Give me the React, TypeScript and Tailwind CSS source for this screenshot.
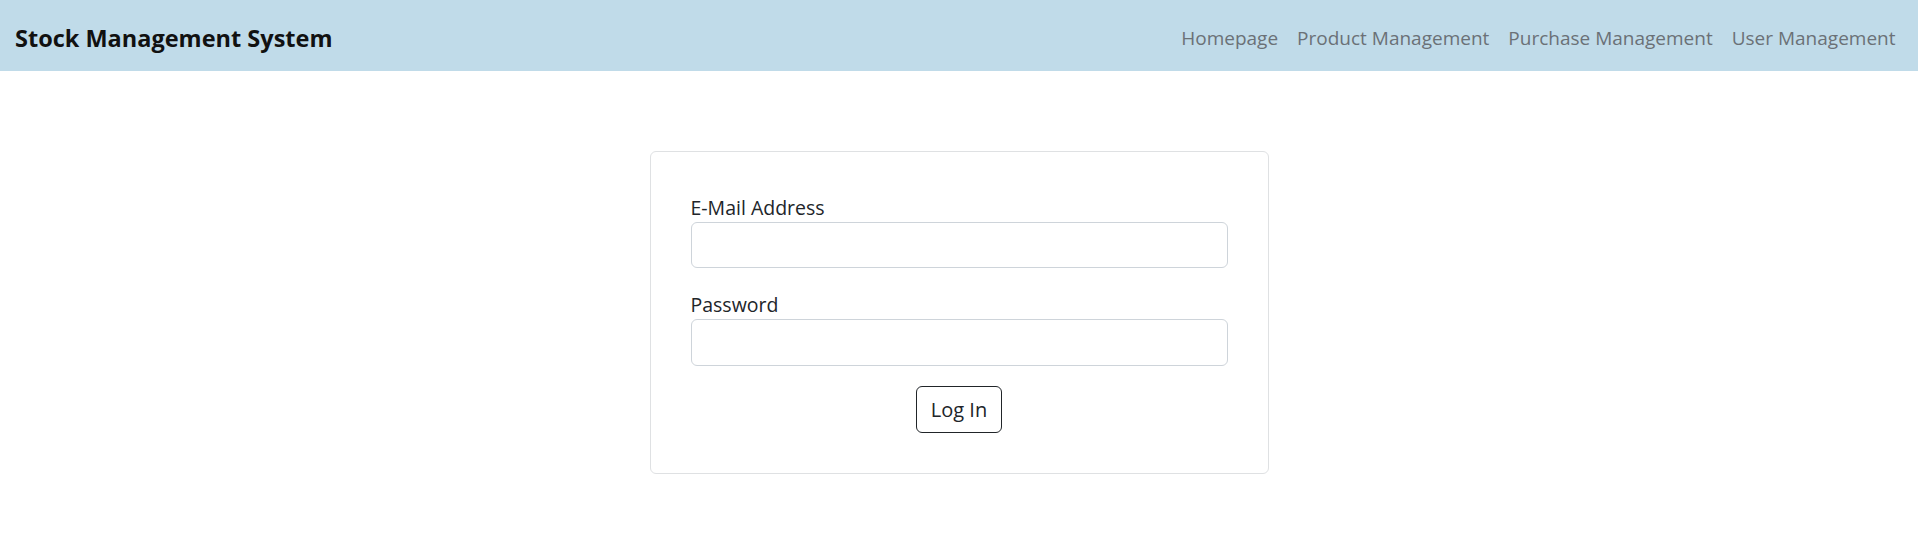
export default function App() {
  const links = ["Homepage", "Product Management", "Purchase Management", "User Management"]

  return (
    <div className="min-h-screen bg-white text-[#212529] font-['Open_Sans',sans-serif]">
      {/* Top bar */}
      <nav className="h-[71px] bg-[#c0dbe9] flex items-center justify-between pl-[15px] pr-[13px] pt-[6px]">
        <div className="text-[23.5px] font-bold text-[#111] leading-none">Stock Management System</div>
        <ul className="flex items-center">
          {links.map((l) => (
            <li key={l}>
              <a href="#" className="block px-[9.5px] text-[19px] text-[#6b7177]">
                {l}
              </a>
            </li>
          ))}
        </ul>
      </nav>

      {/* Login card */}
      <div className="w-[619px] mx-auto mt-[80px] border border-[#dfe1e3] rounded-[6px] px-[40px] pt-[41px] pb-[40px]">
        <form onSubmit={(e) => e.preventDefault()}>
          <label className="block text-[19.5px] leading-[29px]">E-Mail Address</label>
          <input
            type="email"
            className="block w-full h-[46px] border border-[#ced4da] rounded-[6px] px-3 text-[20px] focus:outline-none"
          />
          <label className="block text-[19.5px] leading-[29px] mt-[22px]">Password</label>
          <input
            type="password"
            className="block w-full h-[47px] border border-[#ced4da] rounded-[6px] px-3 text-[20px] focus:outline-none"
          />
          <div className="flex justify-center mt-[20px]">
            <button
              type="submit"
              className="h-[47px] px-[14px] border border-[#212529] rounded-[6px] text-[20px] text-[#212529]"
            >
              Log In
            </button>
          </div>
        </form>
      </div>
    </div>
  )
}
